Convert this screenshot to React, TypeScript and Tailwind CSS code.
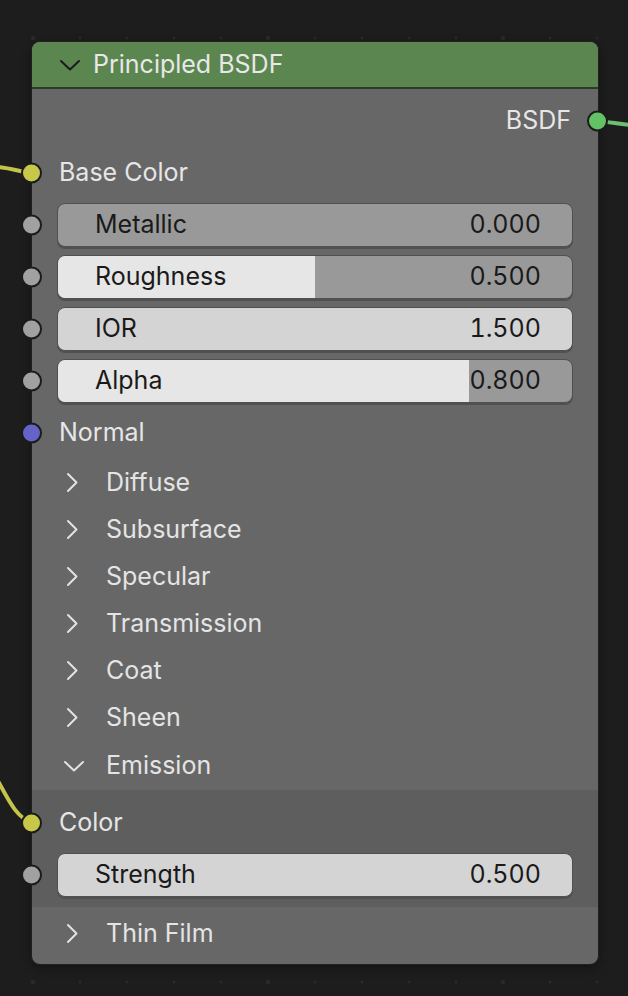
import React from 'react';

type Field = { label: string; value: string; fill?: number; plain?: boolean };

const fields: Field[] = [
  { label: 'Metallic', value: '0.000', fill: 0 },
  { label: 'Roughness', value: '0.500', fill: 0.5 },
  { label: 'IOR', value: '1.500', plain: true },
  { label: 'Alpha', value: '0.800', fill: 0.8 },
];

const panels = ['Diffuse', 'Subsurface', 'Specular', 'Transmission', 'Coat', 'Sheen'];

const Socket = ({ color, side = 'left' }: { color: string; side?: 'left' | 'right' }) => (
  <span
    className={`absolute top-1/2 -translate-y-1/2 w-[21px] h-[21px] rounded-full border-2 border-[#1b1b1b] ${
      side === 'left' ? 'left-[-11px]' : 'right-[-10px]'
    } ${color}`}
  />
);

const ChevronRight = () => (
  <svg width="12" height="21" viewBox="0 0 12 21" className="shrink-0">
    <path d="M2 2 L10.5 10.5 L2 19" fill="none" stroke="#e2e2e2" strokeWidth="2" strokeLinecap="round" strokeLinejoin="round" />
  </svg>
);

const ChevronDown = ({ color = '#e2e2e2' }: { color?: string }) => (
  <svg width="22" height="12" viewBox="0 0 22 12" className="shrink-0">
    <path d="M2 2 L11 10.5 L20 2" fill="none" stroke={color} strokeWidth="2" strokeLinecap="round" strokeLinejoin="round" />
  </svg>
);

const SliderField = ({ field }: { field: Field }) => (
  <div className="relative h-[52px] px-[25px] flex items-center">
    <Socket color="bg-[#a1a1a1]" />
    <div
      className={`relative w-full h-[44px] rounded-[8px] overflow-hidden border border-[#505050] shadow-[0_2px_0_#505050] ${
        field.plain ? 'bg-[#d4d4d4]' : 'bg-[#999999]'
      }`}
    >
      {!field.plain && (
        <div className="absolute inset-y-0 left-0 bg-[#e6e6e6]" style={{ width: `${(field.fill ?? 0) * 100}%` }} />
      )}
      <div className="relative h-full flex items-center justify-between pl-[37px] pr-[31px] text-[25px] text-[#1a1a1a]">
        <span>{field.label}</span>
        <span className="tabular-nums">{field.value}</span>
      </div>
    </div>
  </div>
);

const PanelRow = ({ label, open = false }: { label: string; open?: boolean }) => (
  <div className={`flex items-center text-[25px] text-[#e4e4e4] ${open ? 'h-[49px] pl-[31px] gap-[21px]' : 'h-[47px] pl-[34px] gap-[28px]'}`}>
    {open ? <ChevronDown /> : <ChevronRight />}
    <span>{label}</span>
  </div>
);

const GridDots = () => {
  const xs = Array.from({ length: 13 }, (_, i) => 33 + i * 47);
  return (
    <>
      {[38, 982].map((y) =>
        xs.map((x, i) => (
          <circle key={`${x}-${y}`} cx={x} cy={y} r={i % 5 === 0 ? 2.3 : 1.6} fill="#2a2a2a" />
        ))
      )}
    </>
  );
};

export default function App() {
  return (
    <div className="relative w-[628px] h-[996px] overflow-hidden bg-[#1d1d1d] font-['Inter','Noto_Sans',sans-serif]">
      {/* wires + grid */}
      <svg className="absolute inset-0" width="628" height="996">
        <GridDots />
        <path d="M-2 167 C 12 168, 20 172, 32 173" fill="none" stroke="#c4c44a" strokeWidth="4" />
        <path d="M-10 768 C 4 788, 12 816, 32 823" fill="none" stroke="#c4c44a" strokeWidth="4" />
        <path d="M597 121 C 610 122, 618 124, 630 125" fill="none" stroke="#6cc070" strokeWidth="4" />
      </svg>

      <div className="relative pt-[41px] pl-[31px]">
        <div className="w-[568px] rounded-[9px] border border-[#202020] bg-[#676767] shadow-[0_3px_8px_rgba(0,0,0,0.35)]">
          {/* header */}
          <div className="h-[47px] rounded-t-[8px] bg-[#5b8650] border-b-2 border-[#2c3b29] flex items-center pl-[27px] gap-[12px]">
            <ChevronDown color="#1c1c1c" />
            <span className="text-[25px] text-[#e8e8e8]">Principled BSDF</span>
          </div>

          <div className="pt-[6px]">
            {/* output */}
            <div className="relative h-[52px] flex items-center justify-end pr-[27px] text-[25px] text-[#e6e6e6]">
              <span>BSDF</span>
              <Socket color="bg-[#63c263]" side="right" />
            </div>

            <div className="relative h-[52px] flex items-center pl-[27px] text-[25px] text-[#e6e6e6]">
              <Socket color="bg-[#c7c74a]" />
              <span>Base Color</span>
            </div>

            {fields.map((f) => (
              <SliderField key={f.label} field={f} />
            ))}

            <div className="relative h-[52px] flex items-center pl-[27px] text-[25px] text-[#e6e6e6]">
              <Socket color="bg-[#6464c8]" />
              <span>Normal</span>
            </div>

            {panels.map((p) => (
              <PanelRow key={p} label={p} />
            ))}
            <PanelRow label="Emission" open />

            <div className="bg-[#5e5e5e] pt-[7px] pb-[6px]">
              <div className="relative h-[52px] flex items-center pl-[27px] text-[25px] text-[#e6e6e6]">
                <Socket color="bg-[#c7c74a]" />
                <span>Color</span>
              </div>
              <SliderField field={{ label: 'Strength', value: '0.500', plain: true }} />
            </div>

            <div className="pt-[3px] pb-[7px]">
              <PanelRow label="Thin Film" />
            </div>
          </div>
        </div>
      </div>
    </div>
  );
}
